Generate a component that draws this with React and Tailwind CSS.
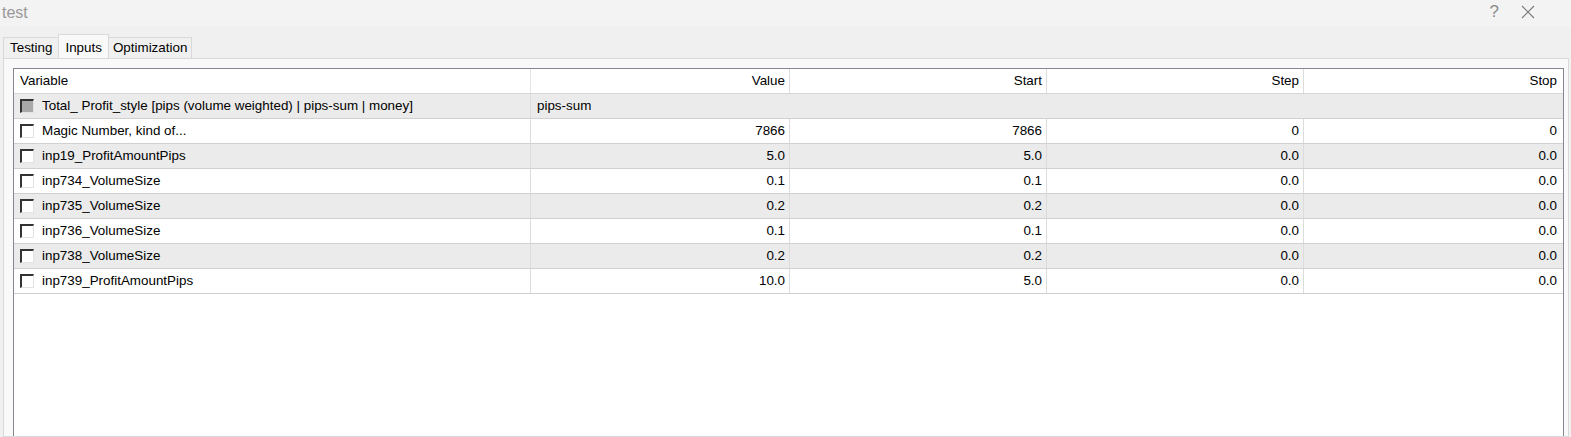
import React from 'react';

const rows = [
  { name: 'Total_ Profit_style [pips (volume weighted) | pips-sum | money]', span: 'pips-sum', disabled: true },
  { name: 'Magic Number, kind of...', value: '7866', start: '7866', step: '0', stop: '0' },
  { name: 'inp19_ProfitAmountPips', value: '5.0', start: '5.0', step: '0.0', stop: '0.0' },
  { name: 'inp734_VolumeSize', value: '0.1', start: '0.1', step: '0.0', stop: '0.0' },
  { name: 'inp735_VolumeSize', value: '0.2', start: '0.2', step: '0.0', stop: '0.0' },
  { name: 'inp736_VolumeSize', value: '0.1', start: '0.1', step: '0.0', stop: '0.0' },
  { name: 'inp738_VolumeSize', value: '0.2', start: '0.2', step: '0.0', stop: '0.0' },
  { name: 'inp739_ProfitAmountPips', value: '10.0', start: '5.0', step: '0.0', stop: '0.0' },
];

const Check = ({ disabled }) => (
  <span
    className={`w-[14px] h-[14px] shrink-0 border-t-2 border-l-2 border-r border-b border-t-[#333333] border-l-[#333333] border-r-[#e3e3e3] border-b-[#e3e3e3] ${
      disabled ? 'bg-[#a9a9a9]' : 'bg-white'
    }`}
  />
);

const Cell = ({ children, w, last }) => (
  <div
    className={`${w} h-full flex items-center justify-end pr-[4px] ${last ? '' : 'border-r border-[#dcdcdc]'}`}
  >
    {children}
  </div>
);

export default function App() {
  return (
    <div
      className="w-[1571px] h-[437px] bg-[#f0f0f0] text-[13.4px] text-black flex flex-col overflow-hidden"
      style={{ fontFamily: '"Liberation Sans", Arial, sans-serif' }}
    >
      {/* title bar */}
      <div className="h-[27px] shrink-0 bg-[#f3f3f3] flex items-center justify-between">
        <span className="pl-[2px] text-[16px] text-[#999999] -mt-[2px]">test</span>
        <div className="flex items-center gap-[22px] pr-[36px] text-[#8a8a8a]">
          <span className="text-[17px] font-light -mt-[4px]">?</span>
          <svg width="14" height="14" viewBox="0 0 14 14" className="-mt-[4px]">
            <path d="M1 1L13 13M13 1L1 13" stroke="#7a7a7a" strokeWidth="1.1" fill="none" />
          </svg>
        </div>
      </div>

      {/* tabs */}
      <div className="h-[31px] shrink-0 flex items-end pl-[3px]">
        <div className="h-[21px] px-[6px] flex items-center border border-b-0 border-[#d9d9d9] bg-[#f0f0f0]">
          Testing
        </div>
        <div className="h-[24px] px-[6px] flex items-start pt-[3px] border border-b-0 border-[#d9d9d9] bg-[#f9f9f9] -mx-px relative z-10">
          Inputs
        </div>
        <div className="h-[21px] px-[4px] flex items-center border border-b-0 border-[#d9d9d9] bg-[#f0f0f0]">
          Optimization
        </div>
      </div>

      {/* tab panel */}
      <div className="flex-1 ml-[3px] mr-[2px] border border-[#d9d9d9] bg-[#f9f9f9] pt-[9px] pl-[9px] pr-[2px]">
        <div className="h-full w-[1551px] border border-[#828790] border-b-0 bg-white">
          {/* header */}
          <div className="h-[25px] flex border-b border-[#d6d6d6]">
            <div className="w-[517px] flex items-center pl-[6px] border-r border-[#e5e5e5]">Variable</div>
            <Cell w="w-[259px]">Value</Cell>
            <Cell w="w-[257px]">Start</Cell>
            <Cell w="w-[257px]">Step</Cell>
            <Cell w="w-[257px]" last>Stop</Cell>
          </div>
          {rows.map((r, i) => (
            <div
              key={i}
              className={`h-[25px] flex border-b border-[#d0d0d0] ${i % 2 === 0 ? 'bg-[#ebebeb]' : 'bg-white'}`}
            >
              <div className="w-[517px] flex items-center gap-[8px] pl-[6px] border-r border-[#dcdcdc]">
                <Check disabled={r.disabled} />
                <span>{r.name}</span>
              </div>
              {r.span ? (
                <div className="flex-1 flex items-center pl-[6px]">{r.span}</div>
              ) : (
                <>
                  <Cell w="w-[259px]">{r.value}</Cell>
                  <Cell w="w-[257px]">{r.start}</Cell>
                  <Cell w="w-[257px]">{r.step}</Cell>
                  <Cell w="w-[257px]" last>{r.stop}</Cell>
                </>
              )}
            </div>
          ))}
        </div>
      </div>
    </div>
  );
}
